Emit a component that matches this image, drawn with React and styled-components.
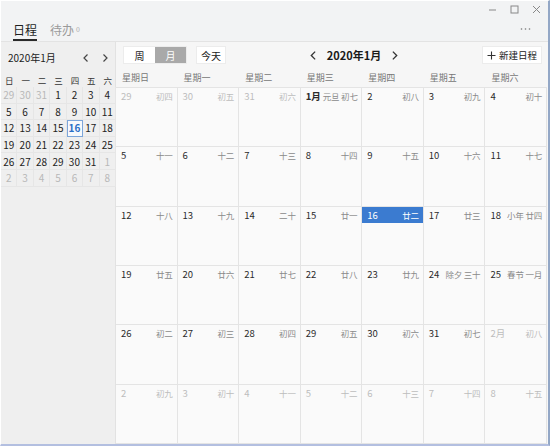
import React from 'react';
import styled, { createGlobalStyle } from 'styled-components';

const GlobalStyle = createGlobalStyle`
  html, body {
    margin: 0;
    padding: 0;
    background: #ffffff;
  }
  body {
    font-family: "Noto Sans CJK SC", "Noto Sans", sans-serif;
    color: #333;
  }
  * { box-sizing: border-box; }
`;

const Window = styled.div`
  width: 550px;
  height: 446px;
  display: flex;
  flex-direction: column;
  border-top: 1px solid #ffffff;
  border-left: 1px solid #ffffff;
  border-right: 2px solid #93a7c6;
  border-bottom: 2px solid #b3bfe0;
  background: #f3f3f3;
  overflow: hidden;
`;

const TitleBar = styled.div`
  height: 41px;
  flex-shrink: 0;
  display: flex;
  flex-direction: column;
  background: #f2f3f4;
  border-bottom: 1px solid #e3e3e3;
`;

const ControlsRow = styled.div`
  height: 16px;
  display: flex;
  justify-content: flex-end;
  align-items: center;
  gap: 4px;
  padding-right: 3px;
`;

const Control = styled.div`
  width: 18px;
  height: 14px;
  display: flex;
  align-items: center;
  justify-content: center;
  color: #888;
`;

const TabsRow = styled.div`
  flex: 1;
  display: flex;
  align-items: stretch;
  padding-left: 12px;
  padding-right: 16px;
`;

const Tab = styled.div`
  display: flex;
  align-items: center;
  margin-right: 13px;
  font-size: 12px;
  color: ${p => (p.$active ? '#1f1f1f' : '#9a9a9a')};
  border-bottom: 2px solid ${p => (p.$active ? '#2a2a2a' : 'transparent')};
  padding-top: 2px;
`;

const Badge = styled.span`
  font-size: 7px;
  margin-left: 2px;
  color: #aaa;
  align-self: flex-start;
  margin-top: 5px;
`;

const More = styled.div`
  margin-left: auto;
  display: flex;
  align-items: center;
  color: #777;
`;

const Body = styled.div`
  flex: 1;
  display: flex;
  min-height: 0;
`;

const Sidebar = styled.div`
  width: 115px;
  flex-shrink: 0;
  background: #efefef;
  border-right: 1px solid #e2e2e2;
  display: flex;
  flex-direction: column;
`;

const MiniHeader = styled.div`
  height: 31px;
  display: flex;
  align-items: center;
  padding: 0 5px 0 7px;
  font-size: 10px;
  color: #222;
`;

const MiniNav = styled.div`
  margin-left: auto;
  display: flex;
  gap: 9px;
  color: #444;
`;

const MiniGrid = styled.div`
  display: grid;
  grid-template-columns: repeat(7, minmax(0, 1fr));
  width: 115px;
`;

const MiniWeekday = styled.div`
  height: 14px;
  display: flex;
  align-items: center;
  justify-content: center;
  font-size: 8.5px;
  color: #333;
`;

const MiniDay = styled.div`
  height: 16.6px;
  display: flex;
  align-items: center;
  justify-content: center;
  font-size: 10px;
  border-right: 1px solid #e6e6e6;
  border-bottom: 1px solid #e6e6e6;
  color: ${p => (p.$muted ? '#b8b8b8' : p.$today ? '#2b6fc6' : '#222')};
  font-weight: ${p => (p.$today ? 700 : 400)};
  background: ${p => (p.$today ? '#f7f9fc' : 'transparent')};
  outline: ${p => (p.$today ? '1px solid #7ca6da' : 'none')};
  outline-offset: -1px;
`;

const Main = styled.div`
  flex: 1;
  display: flex;
  flex-direction: column;
  background: #f6f6f6;
  min-width: 0;
`;

const Toolbar = styled.div`
  height: 26px;
  display: flex;
  align-items: center;
  padding: 0 6px 0 7px;
`;

const Segmented = styled.div`
  display: flex;
  background: #ffffff;
  border: 1px solid #ececec;
`;

const SegButton = styled.div`
  width: ${p => p.$w}px;
  height: 16px;
  display: flex;
  align-items: center;
  justify-content: center;
  font-size: 10px;
  color: ${p => (p.$active ? '#ffffff' : '#222')};
  background: ${p => (p.$active ? '#a9a9a9' : 'transparent')};
`;

const Button = styled.div`
  height: 18px;
  display: flex;
  align-items: center;
  justify-content: center;
  gap: 3px;
  padding: 0 4px;
  margin-left: ${p => p.$ml || 0}px;
  font-size: ${p => p.$fs || 10}px;
  color: #222;
  background: #ffffff;
  border: 1px solid #ececec;
`;

const MonthNav = styled.div`
  flex: 1;
  display: flex;
  align-items: center;
  justify-content: center;
  gap: 8px;
  font-size: 11px;
  font-weight: 700;
  color: #1a1a1a;
`;

const NavArrow = styled.div`
  display: flex;
  align-items: center;
  color: #333;
`;

const WeekHeader = styled.div`
  height: 19px;
  display: grid;
  grid-template-columns: repeat(7, minmax(0, 1fr));
  margin-right: 1px;
`;

const WeekLabel = styled.div`
  display: flex;
  align-items: center;
  padding-left: 6px;
  font-size: 9px;
  color: #777;
`;

const Grid = styled.div`
  flex: 1;
  display: grid;
  grid-template-columns: repeat(7, minmax(0, 1fr));
  grid-template-rows: repeat(6, minmax(0, 1fr));
  margin-right: 1px;
  border-top: 1px solid #e4e4e4;
`;

const Cell = styled.div`
  background: #fafafa;
  border-right: 1px solid #e4e4e4;
  border-bottom: 1px solid #e4e4e4;
  min-width: 0;
`;

const CellHead = styled.div`
  height: 16px;
  display: flex;
  align-items: center;
  justify-content: space-between;
  gap: 2px;
  padding: 0 4px 0 5px;
  background: ${p => (p.$today ? '#3b7bd0' : 'transparent')};
`;

const DayNum = styled.span`
  font-size: 9.5px;
  white-space: nowrap;
  font-weight: ${p => (p.$bold ? 700 : 400)};
  color: ${p => (p.$today ? '#ffffff' : p.$muted ? '#bdbdbd' : '#2a2a2a')};
`;

const Lunar = styled.span`
  font-size: 8.5px;
  letter-spacing: -0.2px;
  color: ${p => (p.$today ? '#ffffff' : p.$muted ? '#bdbdbd' : '#8a8a8a')};
  white-space: nowrap;
`;

const Chevron = ({ dir, size = 10 }) => (
  <svg width={size} height={size} viewBox="0 0 10 10" fill="none" stroke="currentColor" strokeWidth="1.2">
    {dir === 'left' ? <path d="M6.5 1.5 L3 5 L6.5 8.5" /> : <path d="M3.5 1.5 L7 5 L3.5 8.5" />}
  </svg>
);

const weekdaysShort = ['日', '一', '二', '三', '四', '五', '六'];
const weekdaysLong = ['星期日', '星期一', '星期二', '星期三', '星期四', '星期五', '星期六'];

// [label, mini label, lunar, muted, bold]
const days = [
  ['29', '29', '初四', 1], ['30', '30', '初五', 1], ['31', '31', '初六', 1], ['1月', '1', '元旦 初七', 0, 1], ['2', '2', '初八'], ['3', '3', '初九'], ['4', '4', '初十'],
  ['5', '5', '十一'], ['6', '6', '十二'], ['7', '7', '十三'], ['8', '8', '十四'], ['9', '9', '十五'], ['10', '10', '十六'], ['11', '11', '十七'],
  ['12', '12', '十八'], ['13', '13', '十九'], ['14', '14', '二十'], ['15', '15', '廿一'], ['16', '16', '廿二'], ['17', '17', '廿三'], ['18', '18', '小年 廿四'],
  ['19', '19', '廿五'], ['20', '20', '廿六'], ['21', '21', '廿七'], ['22', '22', '廿八'], ['23', '23', '廿九'], ['24', '24', '除夕 三十'], ['25', '25', '春节 一月'],
  ['26', '26', '初二'], ['27', '27', '初三'], ['28', '28', '初四'], ['29', '29', '初五'], ['30', '30', '初六'], ['31', '31', '初七'], ['2月', '1', '初八', 1],
  ['2', '2', '初九', 1], ['3', '3', '初十', 1], ['4', '4', '十一', 1], ['5', '5', '十二', 1], ['6', '6', '十三', 1], ['7', '7', '十四', 1], ['8', '8', '十五', 1],
];

const TODAY = 18;

export default function App() {
  return (
    <>
      <GlobalStyle />
      <Window>
        <TitleBar>
          <ControlsRow>
            <Control>
              <svg width="9" height="9" viewBox="0 0 9 9"><path d="M1 5h7" stroke="currentColor" strokeWidth="1" /></svg>
            </Control>
            <Control>
              <svg width="9" height="9" viewBox="0 0 9 9"><rect x="1" y="1" width="7" height="7" fill="none" stroke="currentColor" strokeWidth="1" /></svg>
            </Control>
            <Control>
              <svg width="9" height="9" viewBox="0 0 9 9"><path d="M1 1l7 7M8 1l-7 7" stroke="currentColor" strokeWidth="1" /></svg>
            </Control>
          </ControlsRow>
          <TabsRow>
            <Tab $active>日程</Tab>
            <Tab>待办<Badge>0</Badge></Tab>
            <More>
              <svg width="12" height="4" viewBox="0 0 12 4" fill="currentColor">
                <circle cx="1.5" cy="2" r="0.8" />
                <circle cx="5.5" cy="2" r="0.8" />
                <circle cx="9.5" cy="2" r="0.8" />
              </svg>
            </More>
          </TabsRow>
        </TitleBar>
        <Body>
          <Sidebar>
            <MiniHeader>
              2020年1月
              <MiniNav>
                <Chevron dir="left" />
                <Chevron dir="right" />
              </MiniNav>
            </MiniHeader>
            <MiniGrid>
              {weekdaysShort.map(w => <MiniWeekday key={w}>{w}</MiniWeekday>)}
              {days.map(([, mini, , muted], i) => (
                <MiniDay key={i} $muted={muted} $today={i === TODAY}>{mini}</MiniDay>
              ))}
            </MiniGrid>
          </Sidebar>
          <Main>
            <Toolbar>
              <Segmented>
                <SegButton $w={31}>周</SegButton>
                <SegButton $w={31} $active>月</SegButton>
              </Segmented>
              <Button $ml={9}>今天</Button>
              <MonthNav>
                <NavArrow><Chevron dir="left" size={11} /></NavArrow>
                2020年1月
                <NavArrow><Chevron dir="right" size={11} /></NavArrow>
              </MonthNav>
              <Button $fs={9.5}>
                <svg width="9" height="9" viewBox="0 0 9 9"><path d="M4.5 0.5v8M0.5 4.5h8" stroke="#333" strokeWidth="1.1" /></svg>
                新建日程
              </Button>
            </Toolbar>
            <WeekHeader>
              {weekdaysLong.map(w => <WeekLabel key={w}>{w}</WeekLabel>)}
            </WeekHeader>
            <Grid>
              {days.map(([label, , lunar, muted, bold], i) => (
                <Cell key={i}>
                  <CellHead $today={i === TODAY}>
                    <DayNum $muted={muted} $bold={bold && !muted} $today={i === TODAY}>{label}</DayNum>
                    <Lunar $muted={muted} $today={i === TODAY}>{lunar}</Lunar>
                  </CellHead>
                </Cell>
              ))}
            </Grid>
          </Main>
        </Body>
      </Window>
    </>
  );
}
